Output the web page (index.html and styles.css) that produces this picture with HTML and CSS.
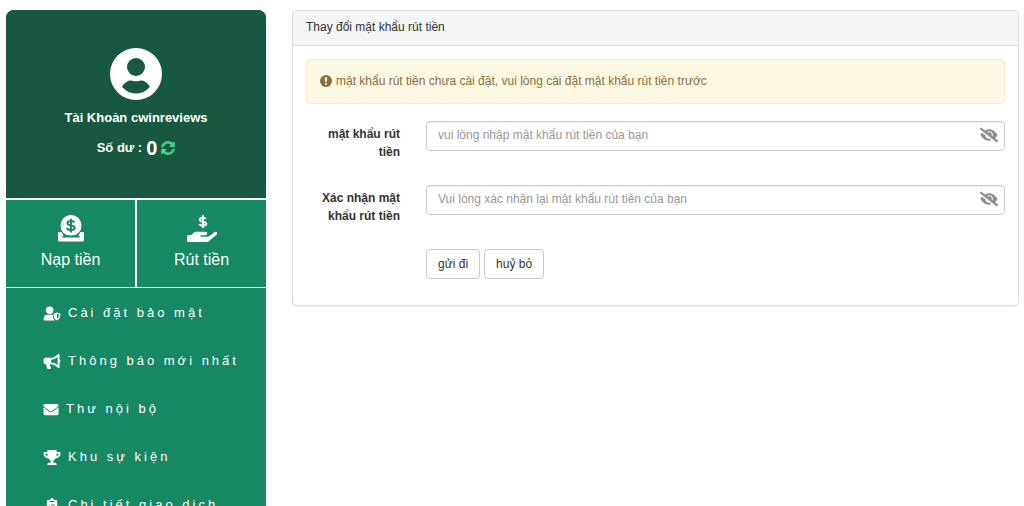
FILE: index.html
```html
<!DOCTYPE html>
<html lang="vi">
<head>
<meta charset="utf-8">
<meta name="viewport" content="width=device-width, initial-scale=1">
<title>Thay đổi mật khẩu rút tiền</title>
<link rel="stylesheet" href="styles.css">
</head>
<body>
<svg class="sprite" aria-hidden="true">
  <symbol id="eye-slash" viewBox="0 0 640 512"><path d="M320 400c-75.85 0-137.25-58.71-142.9-133.11L72.2 185.82c-13.79 17.3-26.48 35.59-36.72 55.59a32.35 32.35 0 0 0 0 29.19C89.71 376.41 197.07 448 320 448c26.91 0 52.87-4 77.89-10.46L346 397.39a144.13 144.13 0 0 1-26 2.61zm313.82 58.1l-110.55-85.44a331.25 331.25 0 0 0 81.25-102.07 32.35 32.35 0 0 0 0-29.19C550.29 135.59 442.93 64 320 64a308.15 308.15 0 0 0-147.32 37.7L45.46 3.37A16 16 0 0 0 23 6.18L3.37 31.45A16 16 0 0 0 6.18 53.9l588.36 454.73a16 16 0 0 0 22.46-2.81l19.64-25.27a16 16 0 0 0-2.82-22.45zm-183.72-142l-39.3-30.38A94.75 94.75 0 0 0 416 256a94.76 94.76 0 0 0-121.31-92.21A47.65 47.65 0 0 1 304 192a46.64 46.64 0 0 1-1.54 10l-73.61-56.89A142.31 142.31 0 0 1 320 112a143.92 143.92 0 0 1 144 144c0 21.63-5.29 41.79-13.9 60.11z"/></symbol>
</svg>
<div class="page">
  <aside class="sidebar">
    <section class="profile">
      <svg class="avatar" viewBox="0 0 52 52" aria-hidden="true"><circle class="avatar-disc" cx="26" cy="26" r="26"/><circle class="avatar-cut" cx="26" cy="19" r="9"/><path class="avatar-cut" d="M12 38.500C15 34 18.500 32.300 21 32.500q5 1.500 10 0c2.500-.2 6 1.500 9 6C36.500 43 31.500 45.500 26 45.500S15.500 43 12 38.500z"/></svg>
      <p class="account">Tài Khoản <span>cwinreviews</span></p>
      <p class="balance"><span>Số dư :</span><strong>0</strong>
        <button class="refresh" type="button" aria-label="Làm mới"><svg viewBox="0 0 512 512"><path d="M370.72 133.28C339.458 104.008 298.888 87.962 255.848 88c-77.458.068-144.328 53.178-162.791 126.85-1.344 5.363-6.122 9.15-11.651 9.15H24.103c-7.498 0-13.194-6.807-11.807-14.176C33.933 94.924 134.813 8 256 8c66.448 0 126.791 26.136 171.315 68.685L463.03 40.97C478.149 25.851 504 36.559 504 57.941V192c0 13.255-10.745 24-24 24H345.941c-21.382 0-32.09-25.851-16.971-40.971l41.75-41.749zM32 296h134.059c21.382 0 32.09 25.851 16.971 40.971l-41.75 41.75c31.262 29.273 71.835 45.319 114.876 45.28 77.418-.07 144.315-53.144 162.787-126.849 1.344-5.363 6.122-9.15 11.651-9.15h57.304c7.498 0 13.194 6.807 11.807 14.176C478.067 417.076 377.187 504 256 504c-66.448 0-126.791-26.136-171.315-68.685L48.97 471.03C33.851 486.149 8 475.441 8 454.059V320c0-13.255 10.745-24 24-24z"/></svg></button>
      </p>
    </section>
    <nav class="tiles">
      <a class="tile" href="#deposit">
        <svg viewBox="0 0 30 28" aria-hidden="true"><path d="M3 18h2.500a11 11 0 0 0 4 5h11a11 11 0 0 0 4-5H27q1 0 1 1v7q0 1.500-1.500 1.500h-23Q2 27.500 2 26v-7q0-1 1-1z"/><circle cx="15" cy="11.500" r="10.500"/><path class="deposit-line" d="M6.500 22.500h17M18.500 8.500Q17.500 7 15 7c-2.500 0-3.500 1-3.500 2.300 0 3.200 7.200 1.200 7.200 4.500 0 1.500-1.200 2.300-3.700 2.300s-3.500-1-4-2.100M15 4.800V18.400"/></svg>
        Nạp tiền
      </a>
      <a class="tile" href="#withdraw">
        <svg viewBox="0 0 30 28" aria-hidden="true"><path transform="translate(0 1) scale(.0525)" d="M565.3 328.1c-11.8-10.7-30.2-10-42.6 0L430.3 402c-11.3 9.1-25.4 14-40 14H272c-8.8 0-16-7.2-16-16s7.2-16 16-16h78.3c15.9 0 30.7-10.9 33.3-26.600 3.300-20-12.100-37.400-31.600-37.400H192c-27 0-53.100 9.300-74.100 26.300L71.400 384H16c-8.800 0-16 7.200-16 16v96c0 8.800 7.200 16 16 16h356.800c14.500 0 28.600-4.900 40-14L564 377c15.200-12.100 16.400-35.300 1.300-48.900z"/><path class="withdraw-line" d="M18.800 4.800Q18 3.700 16 3.700c-2.200 0-3.200.8-3.200 2 0 2.800 6.400 1.200 6.400 4 0 1.300-1.200 2-3.200 2s-3-.7-3.600-1.800M16 1.200V14"/></svg>
        Rút tiền
      </a>
    </nav>
    <nav class="menu">
      <a href="#security"><svg viewBox="0 0 18 16" aria-hidden="true"><circle cx="6.500" cy="4.500" r="4"/><path d="M4 9.300h6v2.200q.2 2.500 2.200 4H1.500Q0 15.500 0 14q0-4.700 4-4.700z"/><path fill-rule="evenodd" d="M14.300 6.800l3.700 1.400c0 3.400-1 6-3.700 7.300-2.700-1.300-3.700-3.900-3.700-7.300zm0 1.700v5.200c1.400-1 2-2.400 2.100-4.400z"/></svg>Cài đặt bảo mật</a>
      <a href="#notices"><svg viewBox="0 0 576 512" aria-hidden="true"><path d="M576 240c0-23.630-12.950-44.040-32-55.120V32.010C544 23.260 537.020 0 512 0c-7.120 0-14.190 2.380-19.980 7.020l-85.030 68.030C364.280 109.190 310.660 128 256 128H64c-35.350 0-64 28.650-64 64v96c0 35.350 28.650 64 64 64h33.700c-1.390 10.480-2.180 21.140-2.180 32 0 39.770 9.260 77.350 25.560 110.940 5.190 10.690 16.520 17.060 28.400 17.060h74.280c26.050 0 41.690-29.840 25.900-50.560-16.400-21.520-26.150-48.360-26.150-77.440 0-11.110 1.620-21.790 4.410-32H256c54.660 0 108.280 18.810 150.980 52.950l85.030 68.030a32.023 32.023 0 0 0 19.980 7.020c24.920 0 32-22.780 32-32V295.130C563.050 284.040 576 263.630 576 240zm-96 141.420l-33.050-26.440C392.950 311.780 325.120 288 256 288v-96c69.120 0 136.950-23.780 190.950-66.980L480 98.580v282.840z"/></svg>Thông báo mới nhất</a>
      <a href="#inbox"><svg class="envelope" viewBox="0 0 512 512" aria-hidden="true"><path d="M502.300 190.800c3.900-3.100 9.700-.2 9.700 4.700V400c0 26.500-21.500 48-48 48H48c-26.500 0-48-21.500-48-48V195.600c0-5 5.700-7.800 9.700-4.700 22.400 17.400 52.100 39.500 154.100 113.600 21.100 15.400 56.700 47.800 92.200 47.600 35.700.3 72-32.800 92.300-47.600 102-74.100 131.600-96.300 154-113.700zM256 320c23.200.4 56.600-29.200 73.400-41.400 132.700-96.300 142.800-104.700 173.400-128.700 5.800-4.500 9.200-11.500 9.200-18.900v-19c0-26.500-21.500-48-48-48H48c-26.500 0-48 21.500-48 48v19c0 7.400 3.400 14.300 9.200 18.900 30.600 23.900 40.700 32.400 173.400 128.700 16.800 12.200 50.200 41.800 73.400 41.400z"/></svg>Thư nội bộ</a>
      <a href="#events"><svg viewBox="0 0 576 512" aria-hidden="true"><path d="M552 64H448V24c0-13.300-10.700-24-24-24H152c-13.300 0-24 10.700-24 24v40H24C10.700 64 0 74.700 0 88v56c0 35.700 22.500 72.400 61.900 100.700 31.500 22.700 69.800 37.100 110 41.700C203.300 338.500 240 360 240 360v72h-48c-35.300 0-64 20.700-64 56v12c0 6.600 5.400 12 12 12h296c6.600 0 12-5.400 12-12v-12c0-35.300-28.700-56-64-56h-48v-72s36.700-21.500 68.100-73.600c40.300-4.600 78.600-19 110-41.700 39.300-28.300 61.900-65 61.900-100.700V88c0-13.300-10.700-24-24-24zM99.300 192.800C74.900 175.200 64 155.600 64 144v-16h64.200c1 32.600 5.800 61.200 12.800 86.200-15.100-5.200-29.200-12.400-41.700-21.400zM512 144c0 16.100-17.700 36.100-35.300 48.800-12.500 9-26.700 16.200-41.800 21.400 7-25 11.800-53.600 12.800-86.200H512v16z"/></svg>Khu sự kiện</a>
      <a href="#transactions"><svg viewBox="0 0 16 16" aria-hidden="true"><path fill-rule="evenodd" d="M4 2h2a2 2 0 0 1 4 0h2q1.500 0 1.500 1.500v11Q13.500 16 12 16H4q-1.500 0-1.500-1.500v-11Q2.500 2 4 2zm1.500 2.200h5v-1h-5zM5 7v1h1V7zm2 0v1h4V7zm-2 3v1h1v-1zm2 0v1h4v-1z"/></svg>Chi tiết giao dịch</a>
    </nav>
  </aside>

  <main class="panel">
    <h1 class="panel-head">Thay đổi mật khẩu rút tiền</h1>
    <form class="panel-body">
      <p class="alert" role="alert"><svg viewBox="0 0 12 12" aria-hidden="true"><path fill-rule="evenodd" d="M6 0a6 6 0 1 1 0 12A6 6 0 0 1 6 0zM4.800 2.300l.4 4.700h1.600l.4-4.700zM5 8v1.800h2V8z"/></svg>mật khẩu rút tiền chưa cài đặt, vui lòng cài đặt mật khẩu rút tiền trước</p>
      <div class="field">
        <label for="pin">mật khẩu rút tiền</label>
        <div class="control"><input id="pin" type="password" placeholder="vui lòng nhập mật khẩu rút tiền của bạn"><button class="reveal" type="button" aria-label="Hiện mật khẩu"><svg><use href="#eye-slash"/></svg></button></div>
      </div>
      <div class="field">
        <label for="pin-again">Xác nhận mật khẩu rút tiền</label>
        <div class="control"><input id="pin-again" type="password" placeholder="Vui lòng xác nhận lại mật khẩu rút tiền của bạn"><button class="reveal" type="button" aria-label="Hiện mật khẩu"><svg><use href="#eye-slash"/></svg></button></div>
      </div>
      <div class="field">
        <div class="actions"><button class="btn" type="submit">gửi đi</button><button class="btn" type="reset">huỷ bỏ</button></div>
      </div>
    </form>
  </main>
</div>
</body>
</html>
```
FILE: styles.css
```css
* { box-sizing: border-box; }
body {
  margin: 0;
  background: #fff;
  color: #333;
  font: 12px/18px "Liberation Sans", Arial, sans-serif;
}
p, h1 { margin: 0; }
svg { fill: currentColor; }
button, input { font: inherit; color: inherit; }
.sprite { display: none; }

.page {
  display: grid;
  grid-template-columns: 260px 1fr;
  gap: 26px;
  align-items: start;
  height: 100vh;
  padding: 10px 5px 0 6px;
  overflow: hidden;
}

.sidebar {
  border-radius: 8px;
  overflow: hidden;
  background: #168863;
  color: #fff;
}
.sidebar a { color: inherit; text-decoration: none; }
.profile {
  display: flex;
  flex-direction: column;
  align-items: center;
  height: 188px;
  padding-top: 38px;
  background: #185840;
  font-weight: bold;
}
.avatar { width: 52px; height: 52px; }
.avatar-disc { fill: #fff; }
.avatar-cut { fill: #185840; }
.account { margin-top: 9px; font-size: 13px; }
.balance {
  display: flex;
  align-items: center;
  gap: 4px;
  margin-top: 9px;
  font-size: 13px;
  line-height: 24px;
}
.balance strong { font-size: 20px; }
.refresh {
  display: flex;
  padding: 0;
  border: 0;
  background: none;
  color: #3fd58c;
}
.refresh svg { width: 14px; height: 14px; stroke: currentColor; stroke-width: 16; }

.tiles {
  display: grid;
  grid-template-columns: 1fr 1fr;
  gap: 2px;
  padding: 2px 0 1px;
  background: #fff;
}
.tile {
  display: flex;
  flex-direction: column;
  align-items: center;
  gap: 8px;
  height: 87px;
  padding-top: 14px;
  background: #168863;
  font-size: 16px;
  line-height: 20px;
}
.tile svg { width: 30px; height: 28px; }
.deposit-line, .withdraw-line { fill: none; stroke-width: 2; }
.deposit-line { stroke: #168863; }
.withdraw-line { stroke: #fff; }

.menu { display: flex; flex-direction: column; padding-top: 1px; }
.menu a {
  display: flex;
  align-items: center;
  gap: 7px;
  height: 48px;
  padding-left: 37px;
  font-size: 13px;
  letter-spacing: 3px;
}
.menu svg { width: 18px; height: 15px; }
.menu .envelope { width: 16px; }

.panel {
  border: 1px solid #ddd;
  border-radius: 4px;
  box-shadow: 0 1px 1px rgba(0, 0, 0, .05);
}
.panel-head {
  padding: 7px 13px 9px;
  border-bottom: 1px solid #ddd;
  border-radius: 3px 3px 0 0;
  background: #f5f5f5;
  font-size: 12px;
  font-weight: normal;
}
.panel-body { padding: 13px 13px 26px; }
.alert {
  display: flex;
  align-items: center;
  gap: 4px;
  margin-bottom: 17px;
  padding: 12px 13px 13px;
  border: 1px solid #faebcc;
  border-radius: 4px;
  background: #fcf8e3;
  color: #8a6d3b;
}
.alert svg { width: 12px; height: 12px; }
.field {
  display: grid;
  grid-template-columns: 94px 1fr;
  gap: 26px;
  min-height: 64px;
}
.field:last-child { min-height: 30px; }
.field label {
  padding-top: 4px;
  font-weight: bold;
  text-align: right;
}
.control { position: relative; }
.control input {
  width: 100%;
  height: 30px;
  padding: 0 40px 2px 11px;
  border: 1px solid #ccc;
  border-radius: 4px;
  background: #fff;
  box-shadow: inset 0 1px 1px rgba(0, 0, 0, .075);
}
.control input::placeholder { color: #999; opacity: 1; }
.reveal {
  position: absolute;
  top: 6px;
  right: 7px;
  display: flex;
  padding: 0;
  border: 0;
  background: none;
  color: #888;
}
.reveal svg { width: 18px; height: 16px; stroke: currentColor; stroke-width: 16; }
.actions { grid-column: 2; display: flex; gap: 4px; }
.btn {
  height: 30px;
  padding: 0 11px;
  border: 1px solid #ccc;
  border-radius: 4px;
  background: #fff;
}
```
